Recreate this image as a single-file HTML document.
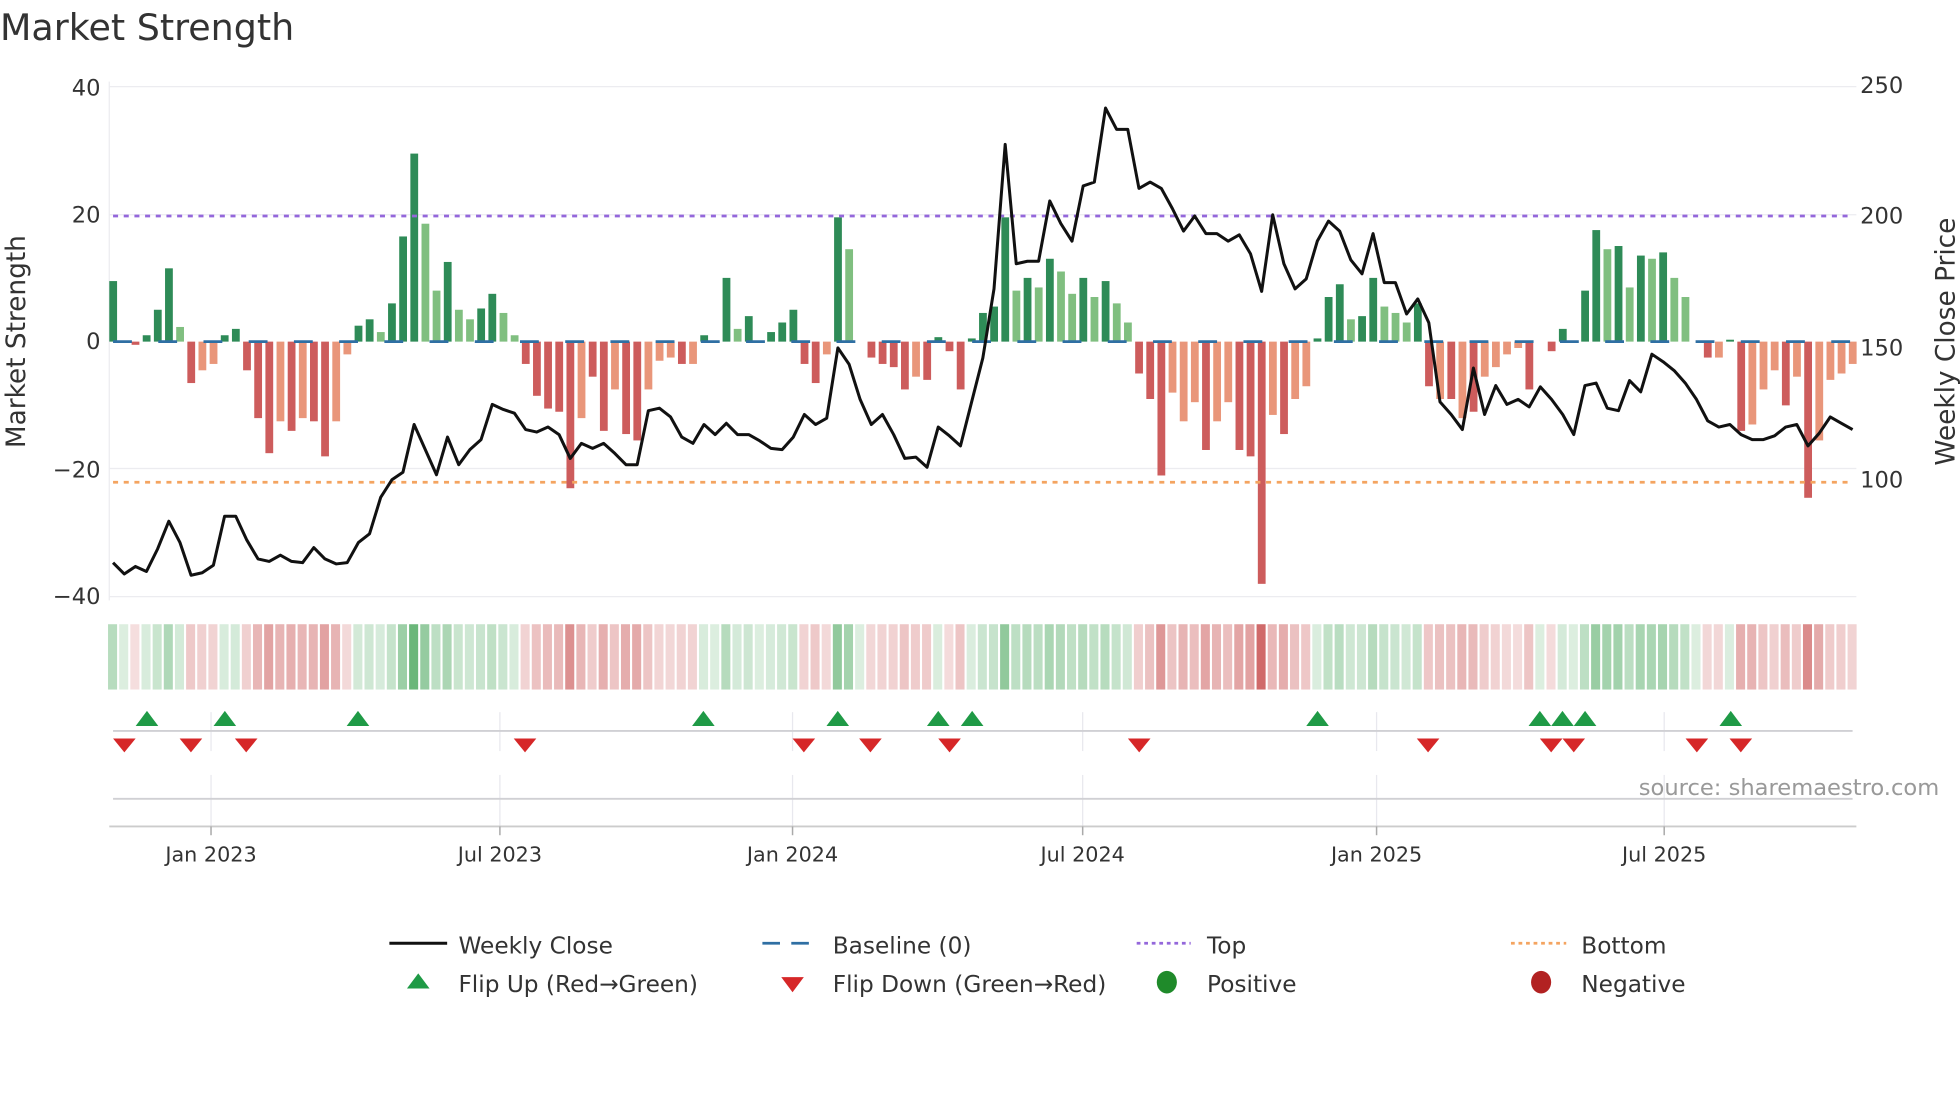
<!DOCTYPE html>
<html><head><meta charset="utf-8"><style>
html,body{margin:0;padding:0;background:#fff;}
svg{display:block;}
text{font-family:"DejaVu Sans","Liberation Sans",sans-serif;fill:#333;}
</style></head><body>
<svg id="s" width="1960" height="1102" viewBox="0 0 1560.5 877.4" xmlns="http://www.w3.org/2000/svg">
<text x="0" y="32" font-size="29">Market Strength</text>
<g stroke="#ececf0" stroke-width="1">
<line x1="87" y1="69" x2="1478" y2="69"/>
<line x1="87" y1="171" x2="1478" y2="171"/>
<line x1="87" y1="373" x2="1478" y2="373"/>
<line x1="87" y1="475" x2="1478" y2="475"/>
<line x1="87" y1="65" x2="87" y2="478"/>
</g>
<g font-size="18" text-anchor="end">
<text x="80" y="76">40</text><text x="80" y="177">20</text><text x="80" y="278">0</text><text x="80" y="380">−20</text><text x="80" y="481">−40</text>
</g>
<g font-size="18">
<text x="1481" y="74">250</text><text x="1481" y="178">200</text><text x="1481" y="283">150</text><text x="1481" y="388">100</text>
</g>
<text font-size="21" text-anchor="middle" transform="translate(20,272) rotate(-90)">Market Strength</text>
<text font-size="21" text-anchor="middle" transform="translate(1556,272) rotate(-90)">Weekly Close Price</text>
<g id="bars"></g>
<line x1="90" y1="172" x2="1475" y2="172" stroke="#9467db" stroke-width="2.2" stroke-dasharray="4 4.5"/>
<line x1="90" y1="384" x2="1475" y2="384" stroke="#f4a460" stroke-width="2.2" stroke-dasharray="4 4.5"/>
<line x1="90" y1="272" x2="1475" y2="272" stroke="#2f6fa3" stroke-width="2.2" stroke-dasharray="15 21"/>
<polyline id="price" fill="none" stroke="#111" stroke-width="2.4" stroke-linejoin="round"/>
<g id="heat"></g>
<g stroke="#e8e8ee" stroke-width="1" id="vgrid"></g>
<line x1="90" y1="582" x2="1475" y2="582" stroke="#d0d0d4" stroke-width="1.5"/>
<line x1="90" y1="636" x2="1475" y2="636" stroke="#d0d0d4" stroke-width="1.5"/>
<line x1="87" y1="658" x2="1478" y2="658" stroke="#ccc" stroke-width="1.5"/>
<g id="marks"></g>
<text x="1544" y="633" font-size="18" text-anchor="end" style="fill:#999">source: sharemaestro.com</text>
<g font-size="16.5" text-anchor="middle" id="ticks"></g>
<g font-size="18.5">
<line x1="310" y1="751" x2="356" y2="751" stroke="#111" stroke-width="2.4"/>
<text x="365" y="759">Weekly Close</text>
<line x1="607" y1="751" x2="651" y2="751" stroke="#2f6fa3" stroke-width="2.2" stroke-dasharray="14 9"/>
<text x="663" y="759">Baseline (0)</text>
<line x1="905" y1="751" x2="948" y2="751" stroke="#9467db" stroke-width="2.2" stroke-dasharray="3 3"/>
<text x="961" y="759">Top</text>
<line x1="1203" y1="751" x2="1247" y2="751" stroke="#f4a460" stroke-width="2.2" stroke-dasharray="3 3"/>
<text x="1259" y="759">Bottom</text>
<polygon points="324,787 342,787 333,775" fill="#1f9a46"/>
<text x="365" y="790">Flip Up (Red→Green)</text>
<polygon points="622,778 640,778 631,790" fill="#d62728"/>
<text x="663" y="790">Flip Down (Green→Red)</text>
<ellipse cx="929" cy="782" rx="8" ry="9" fill="#1f8a2a"/>
<text x="961" y="790">Positive</text>
<ellipse cx="1227" cy="782" rx="8" ry="9" fill="#b22222"/>
<text x="1259" y="790">Negative</text>
</g>
</svg>
<script>
var B="9.5,0,-0.5,1,5,11.5,2.3l,-6.5,-4.5l,-3.5l,1,2,-4.5,-12,-17.5,-12.5l,-14,-12l,-12.5,-18,-12.5l,-2l,2.5,3.5,1.5l,6,16.5,29.5,18.5l,8l,12.5,5l,3.5l,5.2,7.5,4.5l,1l,-3.5,-8.5,-10.5,-11,-23,-12l,-5.5,-14,-7.5l,-14.5,-15.5,-7.5l,-3l,-2.5l,-3.5,-3.5l,1,0,10,2l,4,0,1.5,3,5,-3.5,-6.5,-2l,19.5,14.5l,0,-2.5,-3.5,-4,-7.5,-5.5l,-6,0.7,-1.5,-7.5,0.5,4.5,5.5,19.5,8l,10,8.5l,13,11l,7.5l,10,7l,9.5,6l,3l,-5,-9,-21,-8l,-12.5l,-9.5l,-17,-12.5l,-9.5l,-17,-18,-38,-11.5l,-14.5,-9l,-7l,0.5,7,9,3.5l,4,10,5.5l,4.5l,3l,6,-7,-9l,-9,-12l,-11,-5.5l,-4l,-2l,-1l,-7.5,0,-1.5,2,0,8,17.5,14.5l,15,8.5l,13.5,13l,14,10l,7l,0,-2.5,-2.5l,0.3,-14,-13l,-7.5l,-4.5l,-10,-5.5l,-24.5,-15.5l,-6l,-5l,-3.5l".split(",");
var P=[448,457,451,455,437,415,432,458,456,450,411,411,430,445,447,442,447,448,436,445,449,448,432,425,396,382,376,338,358,378,348,370,358,350,322,326,329,342,344,340,346,365,353,357,353,361,370,370,327,325,332,348,353,338,346,337,346,346,351,357,358,348,330,338,333,277,290,318,338,330,346,365,364,372,340,347,355,320,285,230,115,210,208,208,160,178,192,148,145,86,103,103,150,145,150,166,184,172,186,186,192,187,202,232,171,210,230,222,192,176,184,207,218,186,225,225,250,238,257,320,330,342,293,330,307,322,318,324,308,318,330,346,307,305,325,327,303,312,282,288,295,305,318,335,340,338,346,350,350,347,340,338,355,345,332,337,342];
var n=B.length,step=(1475-90)/(n-1),ns="http://www.w3.org/2000/svg";
function el(t,a,p){var e=document.createElementNS(ns,t);for(var k in a)e.setAttribute(k,a[k]);p.appendChild(e);return e;}
var bars=document.getElementById("bars"),heat=document.getElementById("heat");
var sc=101.5/20;
for(var i=0;i<n;i++){var s=B[i],l=s.indexOf("l")>=0,v=parseFloat(s),x=90+i*step;
 var c=v>=0?(l?"#80bf80":"#2e8b57"):(l?"#e9967a":"#cd5c5c");
 var h=Math.abs(v)*sc;if(h>0.3) el("rect",{x:x-3,y:v>=0?272-h:272,width:6.2,height:h,fill:c},bars);
 var a=Math.min(0.85,0.18+Math.abs(v)/38*0.75);
 el("rect",{x:x-4,y:497,width:7.2,height:52,fill:v>=0?"rgba(60,160,80,"+a+")":"rgba(200,80,80,"+a+")"},heat);}
var pts=[],m=P.length,ps=(1475-90)/(m-1);
for(var j=0;j<m;j++)pts.push((90+j*ps).toFixed(1)+","+P[j]);
document.getElementById("price").setAttribute("points",pts.join(" "));
var D=[[168,"Jan 2023"],[398,"Jul 2023"],[631,"Jan 2024"],[862,"Jul 2024"],[1096,"Jan 2025"],[1325,"Jul 2025"]];
var vg=document.getElementById("vgrid"),tk=document.getElementById("ticks");
D.forEach(function(d){el("line",{x1:d[0],y1:567,x2:d[0],y2:598},vg);el("line",{x1:d[0],y1:617,x2:d[0],y2:658},vg);
 el("line",{x1:d[0],y1:658,x2:d[0],y2:665,stroke:"#aaa","stroke-width":1.2},tk);
 var t=el("text",{x:d[0],y:686},tk);t.textContent=d[1];});
var mk=document.getElementById("marks");
[117,179,285,560,667,747,774,1049,1226,1244,1262,1378].forEach(function(x){el("polygon",{points:(x-9)+",578 "+(x+9)+",578 "+x+",566",fill:"#1f9a46"},mk);});
[99,152,196,418,640,693,756,907,1137,1235,1253,1351,1386].forEach(function(x){el("polygon",{points:(x-9)+",588 "+(x+9)+",588 "+x+",599",fill:"#d62728"},mk);});
</script>
</body></html>
